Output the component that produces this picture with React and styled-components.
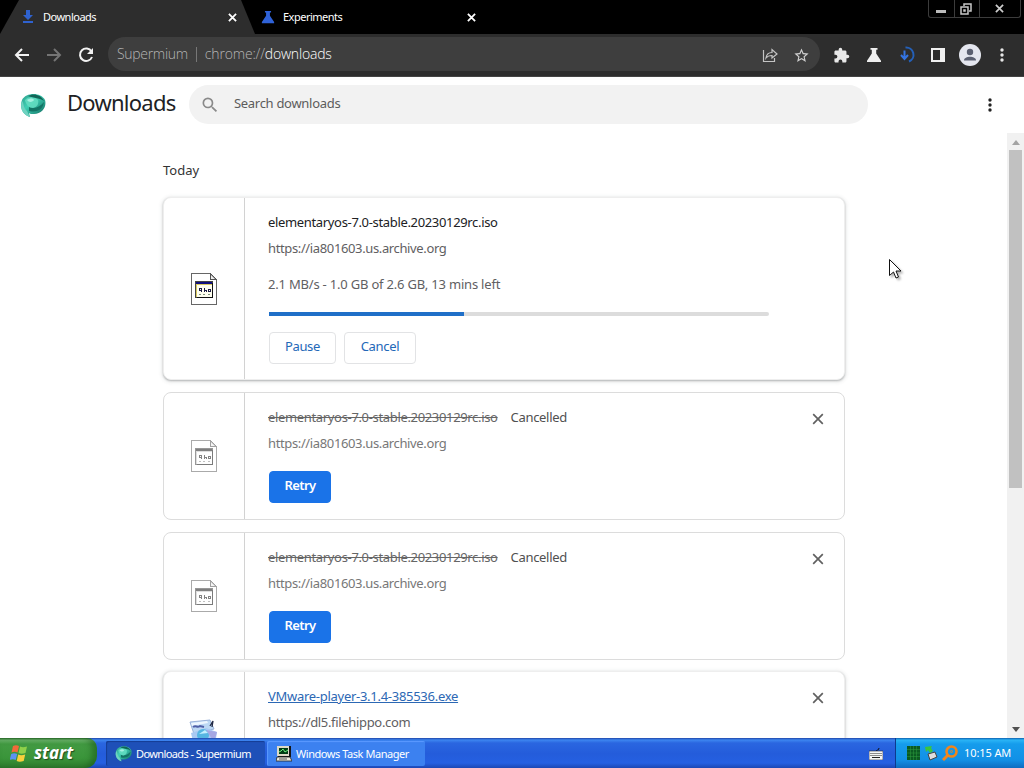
import React from 'react';
import styled, { createGlobalStyle } from 'styled-components';

const Global = createGlobalStyle`
  * { box-sizing: border-box; }
  body { margin: 0; overflow: hidden; font-family: "Noto Sans", "Open Sans", sans-serif; background: #fff; }
  svg { display: block; flex: none; }
`;

const Screen = styled.div`
  width: 1024px; height: 768px; display: flex; flex-direction: column; overflow: hidden; position: relative;
`;
const T = styled.span`
  font-size: ${p => p.$size || 13}px;
  font-weight: ${p => p.$weight || 400};
  color: ${p => p.$color || '#5f6062'};
  letter-spacing: ${p => p.$ls || 0}px;
  font-family: ${p => p.$family || 'inherit'};
  line-height: ${p => p.$lh || 20}px;
  text-decoration: ${p => p.$deco || 'none'};
  white-space: nowrap;
`;

/* Browser chrome */
const TabStrip = styled.div`
  height: 34px; background: #000; display: flex; align-items: stretch; flex: none;
`;
const Tab = styled.div`
  width: ${p => p.$w}px; display: flex; align-items: center;
  padding: 0 0 0 ${p => p.$pad}px; background: ${p => (p.$active ? '#2d2d2d' : '#000')};
  clip-path: ${p => (p.$active ? 'polygon(19px 0, 241px 0, 255px 34px, 0 34px)' : 'none')};
`;
const TabName = styled(T)`
  width: ${p => p.$w}px; margin-left: 8px;
`;
const WindowButtons = styled.div`
  margin-left: auto; margin-right: 3px; height: 18px; display: flex;
  border: 1px solid #3c3c3c; border-top: 0; border-radius: 0 0 3px 3px;
`;
const WindowButton = styled.div`
  width: ${p => p.$w}px; display: flex; align-items: center; justify-content: center;
  padding-right: 2px;
  & + & { border-left: 1px solid #3c3c3c; }
`;
const Toolbar = styled.div`
  height: 43px; background: #2d2d2d; display: flex; align-items: center; flex: none;
  border-bottom: 1px solid #444;
`;
const NavButtons = styled.div`
  width: 108px; padding-left: 14px; display: flex; gap: 16px;
`;
const Omnibox = styled.div`
  width: 712px; height: 34px; margin-bottom: 2px; border-radius: 17px; background: #3e3e3e;
  display: flex; align-items: center; padding: 0 10px 0 9px;
`;
const OmniIcons = styled.div`
  margin-left: auto; display: flex; gap: 15px; padding-top: 2px;
`;
const Divider = styled.div`
  width: 1px; height: 15px; background: #777; margin: 0 8px;
`;
const ToolIcons = styled.div`
  display: flex; align-items: center; padding-left: 13px; gap: 16px;
`;
const Avatar = styled.div`
  margin: 0 -4px 0 -2px;
`;

/* Downloads page */
const PageHeader = styled.header`
  height: 56px; flex: none; display: flex; align-items: center; padding-left: 20px;
`;
const PageTitle = styled(T).attrs({ as: 'h1' })`
  margin: 0 0 7px 21px; width: 122px;
`;
const Search = styled.div`
  width: 679px; height: 39px; border-radius: 20px; background: #f2f2f2;
  display: flex; align-items: center; padding-left: 11px; gap: 14px; margin-bottom: 1px;
`;
const SearchText = styled(T)`
  margin-bottom: 3px;
`;
const MenuSlot = styled.div`
  margin-left: 113px;
`;
const Page = styled.div`
  height: 605px; display: flex; flex: none; overflow: hidden;
`;
const Content = styled.main`
  width: 1007px; padding: 27px 0 0 163px; display: flex; flex-direction: column;
`;
const Today = styled(T)`
  height: 20px; margin-bottom: 17px;
`;
const Card = styled.section`
  width: 682px; height: ${p => p.$h}px; margin-bottom: ${p => p.$gap || 12}px; flex: none; display: flex;
  border-radius: 8px; background: #fff;
  border: 1px solid ${p => (p.$raised ? '#eee' : '#dcdcdc')};
  box-shadow: ${p => (p.$raised ? '0 1px 2px rgba(60,64,67,.32), 0 1px 4px 1px rgba(60,64,67,.12)' : 'none')};
`;
const IconCell = styled.div`
  width: 81px; border-right: 1px solid #d2d2d2; display: flex; justify-content: center;
  align-items: center;
  svg { opacity: ${p => (p.$dim ? 0.55 : 1)}; filter: ${p => (p.$dim ? 'grayscale(1)' : 'none')}; }
`;
const Details = styled.div`
  flex: 1; padding: 11px 20px 0 23px; display: flex; flex-direction: column;
`;
const TitleRow = styled.div`
  height: 26px; display: flex; align-items: center; gap: 13px;
`;
const CloseSlot = styled.div`
  margin-left: auto; padding-top: 3px;
`;
const Line = styled.div`
  height: 26px; display: flex; align-items: center;
`;
const Status = styled(Line)`
  margin-top: 10px;
`;
const Track = styled.div`
  width: 500px; height: 4px; margin: 15px 0 16px 1px; background: #dcdcdc; border-radius: 0 2px 2px 0;
`;
const Fill = styled.div`
  height: 4px; background: #1f6fc8;
`;
const Buttons = styled.div`
  display: flex; gap: 8px; margin-left: 1px;
`;
const Button = styled.button`
  width: ${p => p.$w}px; height: 32px; padding: 0 0 5px; border-radius: 4px; text-align: center;
  font-family: inherit;
  background: ${p => (p.$primary ? '#1a73e8' : '#fff')};
  border: 1px solid ${p => (p.$primary ? '#1a73e8' : '#e2e3e5')};
  margin-top: ${p => (p.$primary ? 15 : 0)}px;
`;
const Scrollbar = styled.div`
  width: 17px; background: #f1f1f1; display: flex; flex-direction: column; align-items: center;
  padding: 7px 0 6px;
`;
const Thumb = styled.div`
  width: 13px; height: 338px; background: #c1c1c1; margin-top: 5px; margin-bottom: auto;
`;
const Arrow = styled.div`
  border: 4px solid transparent; border-top-width: ${p => (p.$up ? 0 : 5)}px; border-bottom-width: ${p => (p.$up ? 5 : 0)}px;
  border-top-color: ${p => (p.$up ? 'transparent' : '#505050')};
  border-bottom-color: ${p => (p.$up ? '#a3a3a3' : 'transparent')};
`;

/* Taskbar */
const Taskbar = styled.footer`
  height: 30px; flex: none; display: flex; align-items: stretch; position: relative;
  background: linear-gradient(#1f45a8 0, #3d86f0 2px, #2a66e0 5px, #245cdb 16px, #2560e2 25px, #1c47b4 30px);
`;
const Start = styled.div`
  width: 97px; padding-left: 10px; display: flex; align-items: center; gap: 5px; border-radius: 0 10px 12px 0;
  background: linear-gradient(#2a6b2a 0, #6cb66c 2px, #429a42 6px, #3a953a 20px, #2f7d2f 30px);
  box-shadow: inset -5px 0 6px rgba(20,80,20,.5);
`;
const StartText = styled(T)`
  font-style: italic; text-shadow: 1px 1px 1px rgba(0,0,0,.5);
`;
const Task = styled.div`
  width: ${p => p.$w}px; height: 25px; margin: 3px 0 0 ${p => p.$ml}px; padding-left: 9px; border-radius: 2px;
  display: flex; align-items: center; gap: 4px;
  background: ${p => (p.$active ? '#1e50b8' : '#3c81f0')};
  box-shadow: inset 1px 1px 1px ${p => (p.$active ? '#143c94' : '#5b9aff')};
`;
const Keyboard = styled.div`
  margin-left: auto; width: 26px; display: flex; align-items: center;
`;
const Tray = styled.div`
  width: 129px; display: flex; align-items: center; padding-left: 11px; gap: 4px;
  border-left: 1px solid #0d3a8e;
  background: linear-gradient(#0f5fae 0, #2ab4f6 2px, #159cec 6px, #1290e6 22px, #0e6cc0 30px);
`;
const Clock = styled(T)`
  margin-left: 2px;
`;
const Cursor = styled.div`
  position: absolute; left: 888px; top: 258px; filter: drop-shadow(2px 2px 1px rgba(0,0,0,.3));
`;

const Mat = ({ d, size = 18, color = '#e8e8e8' }) => (
  <svg width={size} height={size} viewBox="0 0 24 24" fill={color}><path d={d} /></svg>
);
const Cross = ({ s = 9, c = '#fff', w = 2 }) => (
  <svg width={s} height={s} viewBox="0 0 10 10"><path d="M1 1l8 8M9 1l-8 8" stroke={c} strokeWidth={w} /></svg>
);
const Dots = ({ c }) => (
  <svg width="18" height="18" viewBox="0 0 18 18" fill={c}>
    <circle cx="9" cy="4" r="1.7" /><circle cx="9" cy="9" r="1.7" /><circle cx="9" cy="14" r="1.7" />
  </svg>
);
const Flask = ({ size, color }) => (
  <svg width={size} height={size} viewBox="0 0 16 16" fill={color}>
    <path d="M4.500 1h7v1.800h-1.300v3.700l4.800 7.200V15H1v-1.300l4.800-7.200V2.800H4.500z" />
  </svg>
);
const Logo = ({ size }) => (
  <svg width={size} height={size} viewBox="0 0 26 26">
    <defs>
      <linearGradient id="orb" x1="0" y1="0" x2="1" y2="1">
        <stop offset="0" stopColor="#2f9c8a" /><stop offset=".4" stopColor="#3fd0b4" /><stop offset="1" stopColor="#0b6358" />
      </linearGradient>
    </defs>
    <path d="M2 8C6 0 21 0 25 8c2 7-3 14-11 14-3 0-4 0-5-1l1 4C3 23-1 16 2 8z" fill="url(#orb)" />
    <path d="M9 19c9 2 14-2 15-9-4 5-9 7-15 5z" fill="#137465" />
    <path d="M5 8c4-4 10-3 13 0 1 4-1 7-5 8-4 0-7-3-8-8z" fill="#62dcc0" opacity=".9" />
    <path d="M7 8c3-2 6-2 7 0-1 2-5 3-7 0z" fill="#b4f5e8" opacity=".8" />
    <path d="M2 9c2 2 1 7 5 10l3 6C4 23-1 17 2 9z" fill="#6fd2c0" />
    <path d="M8 4c5-3 13-2 16 5-4-3-10-3-16-5z" fill="#126457" />
  </svg>
);
const FileIcon = () => (
  <svg width="26" height="32" viewBox="0 0 26 32" shapeRendering="crispEdges">
    <path d="M.5.5h19l6 6v25H.5z" fill="#fff" stroke="#666" />
    <path d="M19.500.5v6h6z" fill="#eee" stroke="#555" />
    <path d="M19.500 1l5.500 5.500" stroke="#555" shapeRendering="auto" />
    <rect x="4.500" y="8.500" width="17" height="16" fill="#fffff0" stroke="#444" />
    <rect x="5" y="9" width="16" height="2" fill="#10107c" />
    <path d="M5 11.500h16M5.500 12v12" stroke="#d8c860" fill="none" />
    <path d="M21.500 10v15M6 24.500h16" stroke="#111" strokeWidth="1.500" />
    <path d="M8 15h2v4M8 15v2h2M13 15v4M14 17h1v2M17 16h2v2h-2z" stroke="#1b1b44" fill="none" />
    <path d="M8 21h2M12 21h2M17 21h2" stroke="#7c9178" />
  </svg>
);
const InstallerIcon = () => (
  <svg width="32" height="32" viewBox="0 0 32 32">
    <path d="M2 3l20-2 4 9-20 5z" fill="#bcd8f4" stroke="#9ab2da" />
    <path d="M3 4l16-2 1 2-16 3z" fill="#edf6ff" />
    <path d="M5 8c3-2 4 1 7-1l4 1" stroke="#5060a8" strokeWidth="2" fill="none" />
    <path d="M22 7l3-5-1 6" stroke="#202844" strokeWidth="1.3" fill="none" />
    <path d="M3 14l15-5 11 4-2 13-20 5z" fill="#a9c9f3" />
    <circle cx="15" cy="16" r="6" fill="#56b6e2" /><path d="M18 11l11 2-3 10z" fill="#a5a7e3" />
    <path d="M11 15l6-4 3 3z" fill="#c4f0ff" />
  </svg>
);
const WinFlag = () => (
  <svg width="19" height="19" viewBox="0 0 19 19">
    <path d="M3 2c2-1 4-1 6 0L7.500 8.500c-2-1-4-1-6 0z" fill="#f26a3a" />
    <path d="M10 2.500c2 1 4 1 7 0L15.500 9c-3 1-5 1-7 0z" fill="#8fd04a" />
    <path d="M1.200 10c2-1 4-1 6 0L5.700 16c-2-1-4-1-6 0z" fill="#5c92f2" />
    <path d="M8.200 10.500c2 1 4 1 7 0L13.700 17c-3 1-5 1-7 0z" fill="#f8d03c" />
  </svg>
);
const TaskManagerIcon = () => (
  <svg width="16" height="16" viewBox="0 0 16 16">
    <rect x="2" y="0" width="13" height="11" fill="#151515" /><rect x="1" y="0" width="12" height="10" fill="#ded9c8" />
    <rect x="3" y="2" width="9" height="6" fill="#003c14" /><path d="M3 6l2-1 2-2 2 3 3-2" stroke="#6cf07e" fill="none" />
    <path d="M1 11h13l2 4H0z" fill="#ece8dd" stroke="#222" strokeWidth=".8" /><path d="M3 13h8" stroke="#555" />
  </svg>
);
const KeyboardIcon = () => (
  <svg width="14" height="13" viewBox="0 0 14 13">
    <path d="M7 5c0-3 3-1 3-4" stroke="#111" fill="none" />
    <rect x="0" y="4" width="14" height="9" fill="#f5f5f5" stroke="#223" strokeWidth=".6" />
    <path d="M1.500 6.500h11M1.500 8.500h11" stroke="#222" strokeDasharray="1 1" /><path d="M3 10.500h8" stroke="#222" />
  </svg>
);

const WHITE = '#fff';

const FileCard = ({ title, url, gap }) => (
  <Card $h={128} $gap={gap}>
    <IconCell $dim><FileIcon /></IconCell>
    <Details>
      <TitleRow>
        <T $deco="line-through" $ls={-0.34} $color="#666">{title}</T>
        <T $ls={-0.32} $color="#505050">Cancelled</T>
        <CloseSlot><Cross s={12} c="#606060" w={1.4} /></CloseSlot>
      </TitleRow>
      <Line><T $color="#777" $ls={-0.37}>{url}</T></Line>
      <Buttons><Button $primary $w={62}><T $color={WHITE} $weight={600} $ls={-0.6}>Retry</T></Button></Buttons>
    </Details>
  </Card>
);

export default function App() {
  const iso = 'elementaryos-7.0-stable.20230129rc.iso';
  const host = 'https://ia801603.us.archive.org';
  return (
    <Screen>
      <Global />
      <TabStrip>
        <Tab $active $w={255} $pad={21}>
          <svg width="14" height="14" viewBox="0 0 14 14" fill="#2f62cf"><path d="M5 0h4v5h3l-5 5-5-5h3zM2 11h10v2H2z" /></svg>
          <TabName $w={185} $size={11} $color={WHITE} $ls={-0.5}>Downloads</TabName>
          <Cross />
        </Tab>
        <Tab $w={240} $pad={6}>
          <Flask size={14} color="#2f62d8" />
          <TabName $w={184} $size={11} $color={WHITE} $ls={-0.5}>Experiments</TabName>
          <Cross />
        </Tab>
        <WindowButtons>
          <WindowButton $w={25}><svg width="10" height="10"><rect y="6" width="10" height="3" fill="#bbb" /></svg></WindowButton>
          <WindowButton $w={25}>
            <svg width="12" height="12" fill="none" stroke="#c8c8c8" strokeWidth="1.5"><path d="M4 3V1h7v7H9" /><rect x="1" y="4" width="7" height="7" /><rect x="4" y="7" width="1" height="1" /></svg>
          </WindowButton>
          <WindowButton $w={41}><Cross c="#ccc" w={1.9} /></WindowButton>
        </WindowButtons>
      </TabStrip>
      <Toolbar>
        <NavButtons>
          <svg width="16" height="16" viewBox="0 0 16 16" fill="none" stroke="#f2f2f2" strokeWidth="2"><path d="M15 8H2M8 2L2 8l6 6" /></svg>
          <svg width="16" height="16" viewBox="0 0 16 16" fill="none" stroke="#747474" strokeWidth="2"><path d="M1 8h13M8 2l6 6-6 6" /></svg>
          <svg width="16" height="16" viewBox="0 0 16 16" fill="none" stroke="#f2f2f2" strokeWidth="2"><path d="M13.500 4.500A6.200 6.200 0 1 0 14 10" /><path d="M15 1v6H9z" fill="#f2f2f2" stroke="none" /></svg>
        </NavButtons>
        <Omnibox>
          <T $size={14} $weight={300} $color="#b5b5b5" $family='"Open Sans", sans-serif' $ls={-0.3}>Supermium</T>
          <Divider />
          <T $size={14} $weight={300} $color="#b5b5b5" $family='"Open Sans", sans-serif' $ls={-0.18}>chrome://<T $size={14} $weight={300} $color={WHITE} $ls={-0.18}>downloads</T></T>
          <OmniIcons>
            <svg width="16" height="16" viewBox="0 0 16 16" fill="none" stroke="#c4c4c4" strokeWidth="1.2"><path d="M1.500 3v11.500h11V11M4 11c.5-4 3-5.500 6-5.500V2.500L15 7l-5 4V8.500C7.500 8.500 5.500 9 4 11z" /></svg>
            <Mat size={17} color="#d0d0d0" d="M22 9.240l-7.190-.62L12 2 9.190 8.630 2 9.240l5.460 4.730L5.820 21 12 17.270 18.180 21l-1.630-7.030L22 9.240zM12 15.400l-3.760 2.270 1-4.280-3.320-2.880 4.380-.38L12 6.100l1.710 4.040 4.380.38-3.320 2.880 1 4.280L12 15.400z" />
          </OmniIcons>
        </Omnibox>
        <ToolIcons>
          <Mat size={17} d="M20.500 11H19V7c0-1.100-.9-2-2-2h-4V3.500a2.500 2.500 0 0 0-5 0V5H4c-1.100 0-2 .9-2 2v3.800h1.500a2.700 2.700 0 0 1 0 5.400H2V20c0 1.100.9 2 2 2h3.800v-1.500a2.700 2.700 0 0 1 5.400 0V22H17c1.100 0 2-.9 2-2v-4h1.500a2.500 2.500 0 0 0 0-5z" />
          <Flask size={16} color="#eee" />
          <svg width="17" height="18" viewBox="0 0 17 18" fill="none" strokeWidth="2"><path d="M7.500 1.500a7.300 7.300 0 0 1 3.500 14" stroke="#2460b8" /><path d="M6.500 4.500v8M3 9l3.500 4L10 9" stroke="#3474e2" /></svg>
          <svg width="14" height="14" viewBox="0 0 14 14"><path fillRule="evenodd" fill="#f0f0f0" d="M0 0h14v14H0zM2 2v10h7V2z" /></svg>
          <Avatar>
            <svg width="22" height="22" viewBox="0 0 22 22"><circle cx="11" cy="11" r="11" fill="#e4e6ee" /><circle cx="11" cy="8" r="3.200" fill="#5a5f70" /><path d="M5 16.500c0-5 12-5 12 0z" fill="#5a5f70" /></svg>
          </Avatar>
          <Dots c="#e8e8e8" />
        </ToolIcons>
      </Toolbar>

      <PageHeader>
        <Logo size={26} />
        <PageTitle $size={22} $color="#202124" $lh={28} $ls={-0.75}>Downloads</PageTitle>
        <Search>
          <Mat size={20} color="#8a8a8a" d="M15.500 14h-.79l-.28-.27A6.470 6.470 0 0 0 16 9.500 6.500 6.500 0 1 0 9.500 16c1.610 0 3.090-.59 4.230-1.570l.27.28v.79l5 4.990L20.490 19l-4.990-5zm-6 0C7.010 14 5 11.990 5 9.500S7.010 5 9.500 5 14 7.010 14 9.500 11.990 14 9.500 14z" />
          <SearchText $color="#5c5c5c" $ls={-0.3}>Search downloads</SearchText>
        </Search>
        <MenuSlot><Dots c="#222" /></MenuSlot>
      </PageHeader>

      <Page>
        <Content>
          <Today $color="#333">Today</Today>
          <Card $h={183} $raised>
            <IconCell><FileIcon /></IconCell>
            <Details>
              <TitleRow><T $color="#202124" $ls={-0.34}>{iso}</T></TitleRow>
              <Line><T $ls={-0.37}>{host}</T></Line>
              <Status><T $ls={-0.2}>2.1 MB/s - 1.0 GB of 2.6 GB, 13 mins left</T></Status>
              <Track><Fill style={{ width: '39%' }} /></Track>
              <Buttons>
                <Button $w={67}><T $color="#2368b8" $ls={-0.4}>Pause</T></Button>
                <Button $w={72}><T $color="#2368b8" $ls={-0.3}>Cancel</T></Button>
              </Buttons>
            </Details>
          </Card>
          <FileCard title={iso} url={host} />
          <FileCard title={iso} url={host} gap={11} />
          <Card $h={128} $raised>
            <IconCell><InstallerIcon /></IconCell>
            <Details>
              <TitleRow>
                <T $deco="underline" $color="#2c68b4" $ls={-0.28}>VMware-player-3.1.4-385536.exe</T>
                <CloseSlot><Cross s={12} c="#606060" w={1.4} /></CloseSlot>
              </TitleRow>
              <Line><T $ls={-0.33}>https://dl5.filehippo.com</T></Line>
            </Details>
          </Card>
        </Content>
        <Scrollbar><Arrow $up /><Thumb /><Arrow /></Scrollbar>
      </Page>

      <Taskbar>
        <Start><WinFlag /><StartText $size={17} $weight={700} $color={WHITE}>start</StartText></Start>
        <Task $active $w={159} $ml={9}><Logo size={17} /><T $size={11} $color={WHITE} $ls={-0.6}>Downloads - Supermium</T></Task>
        <Task $w={158} $ml={2}><TaskManagerIcon /><T $size={11} $color={WHITE} $ls={-0.45}>Windows Task Manager</T></Task>
        <Keyboard><KeyboardIcon /></Keyboard>
        <Tray>
          <svg width="13" height="14" viewBox="0 0 13 14"><rect width="13" height="14" fill="#0b5a22" /><path d="M0 3.500h13M0 7h13M0 10.500h13M3.500 0v14M6.500 0v14M9.500 0v14" stroke="#2f9c3e" strokeWidth=".5" /></svg>
          <svg width="14" height="16" viewBox="0 0 14 16"><path d="M4 9l7-2 2 5-7 3z" fill="#ddd" stroke="#444" /><path d="M1 2l7-1-1 2 2 3-3 2-2-3-2 2z" fill="#3cc43c" /></svg>
          <svg width="16" height="16" viewBox="0 0 16 16" fill="none" stroke="#f0861c"><circle cx="9.500" cy="6.500" r="5" strokeWidth="2.600" /><path d="M6 10l-5 5" strokeWidth="3" /><circle cx="9.500" cy="6.500" r="1" strokeWidth="1" /></svg>
          <Clock $size={11} $color={WHITE} $ls={-0.1}>10:15 AM</Clock>
        </Tray>
      </Taskbar>
      <Cursor>
        <svg width="15" height="22" viewBox="0 0 15 22"><path d="M1.500 1.500v16l4-3.500 2.500 6 2.500-1-2.500-6H13z" fill="#fff" stroke="#111" /></svg>
      </Cursor>
    </Screen>
  );
}
